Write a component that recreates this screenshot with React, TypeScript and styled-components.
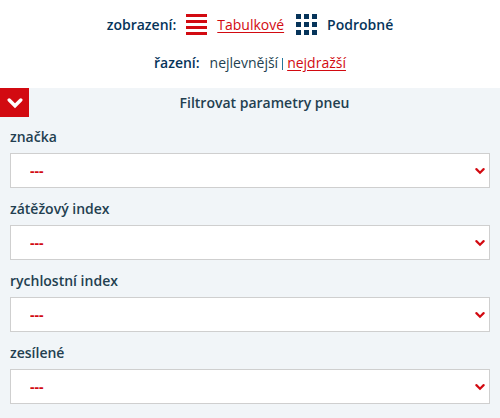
import React, { useId } from "react";
import styled, { createGlobalStyle } from "styled-components";

const red = "#d20a11";
const navy = "#06345a";
const ink = "#233f50";

const GlobalStyle = createGlobalStyle`
  *, *::before, *::after { box-sizing: border-box; }
  body {
    margin: 0;
    background: #fff;
    color: ${ink};
    font-family: "Open Sans", "Noto Sans", sans-serif;
    font-size: 14px;
    line-height: 20px;
  }
`;

const Toolbar = styled.header`
  display: flex;
  flex-direction: column;
  align-items: center;
  gap: 18px;
  padding: 14px 0 15px;
`;

const ViewRow = styled.div`
  display: flex;
  align-items: center;
  gap: 10px;
  height: 21px;
`;

const SortRow = styled.div`
  display: flex;
  align-items: center;
  gap: 4px;
`;

const RowLabel = styled.span<{ $gap?: number }>`
  color: ${navy};
  font-weight: 600;
  margin-right: ${({ $gap }) => $gap ?? 0}px;
`;

const ViewOption = styled.span`
  display: flex;
  align-items: center;
  gap: 10px;
  margin-right: 2px;
  &:last-child { margin-right: 0; }
`;

const TextLink = styled.a`
  color: ${red};
  text-decoration: underline;
  text-underline-offset: 2px;
`;

const Active = styled.strong`
  color: ${navy};
  font-weight: 600;
`;

const Divider = styled.span`
  width: 1px;
  height: 12px;
  margin-top: 2px;
  background: #23779c;
`;

const Panel = styled.section`
  background: #f1f5f8;
  min-height: calc(100vh - 88px);
`;

const PanelHead = styled.div`
  display: grid;
  grid-template-columns: 29px 1fr;
  align-items: center;
`;

const Toggle = styled.button`
  display: flex;
  align-items: center;
  justify-content: center;
  width: 29px;
  height: 29px;
  padding: 0;
  border: 0;
  background: ${red};
  cursor: pointer;
`;

const Title = styled.h2`
  margin: 0;
  font-size: 14px;
  font-weight: 600;
  text-align: center;
`;

const Form = styled.form`
  display: flex;
  flex-direction: column;
  gap: 11px;
  padding: 10px 10px 13px;
`;

const Field = styled.div`
  display: flex;
  flex-direction: column;
  gap: 6px;
`;

const FieldLabel = styled.label`
  font-weight: 600;
`;

const SelectBox = styled.div`
  display: grid;
  align-items: center;
  & > * { grid-area: 1 / 1; }
  & > svg {
    justify-self: end;
    margin-right: 5px;
    pointer-events: none;
  }
`;

const Select = styled.select`
  appearance: none;
  width: 100%;
  height: 35px;
  padding: 0 19px;
  border: 1px solid #cfcfcf;
  border-radius: 0;
  background: #fff;
  color: ${red};
  font: inherit;
  font-weight: 700;
`;

const ListIcon = () => (
  <svg width="21" height="21" viewBox="0 0 21 21" fill={red} aria-hidden="true">
    {[0, 6, 12, 18].map((y) => (
      <rect key={y} y={y} width="21" height="3" />
    ))}
  </svg>
);

const GridIcon = () => (
  <svg width="21" height="21" viewBox="0 0 21 21" fill={navy} aria-hidden="true">
    {[0, 8, 16].map((y) =>
      [0, 8, 16].map((x) => <rect key={`${x}-${y}`} x={x} y={y} width="5" height="5" />)
    )}
  </svg>
);

const Chevron = ({ size, color }: { size: number; color: string }) => (
  <svg width={size} height={size} viewBox="0 0 16 16" fill="none" aria-hidden="true">
    <path
      d="M2.2 5L8 10.8L13.8 5"
      stroke={color}
      strokeWidth="3.4"
      strokeLinecap="round"
    />
  </svg>
);

function FilterField({ label }: { label: string }) {
  const id = useId();
  return (
    <Field>
      <FieldLabel htmlFor={id}>{label}</FieldLabel>
      <SelectBox>
        <Select id={id}>
          <option>---</option>
        </Select>
        <Chevron size={10} color={red} />
      </SelectBox>
    </Field>
  );
}

const filters = ["značka", "zátěžový index", "rychlostní index", "zesílené"];

export default function App() {
  return (
    <>
      <GlobalStyle />
      <Toolbar>
        <ViewRow>
          <RowLabel>zobrazení:</RowLabel>
          <ViewOption>
            <ListIcon />
            <TextLink href="#tabulkove">Tabulkové</TextLink>
          </ViewOption>
          <ViewOption>
            <GridIcon />
            <Active>Podrobné</Active>
          </ViewOption>
        </ViewRow>
        <SortRow>
          <RowLabel $gap={6}>řazení:</RowLabel>
          <span>nejlevnější</span>
          <Divider />
          <TextLink href="#nejdrazsi">nejdražší</TextLink>
        </SortRow>
      </Toolbar>
      <Panel>
        <PanelHead>
          <Toggle type="button" aria-label="Filtrovat parametry pneu">
            <Chevron size={16} color="#fff" />
          </Toggle>
          <Title>Filtrovat parametry pneu</Title>
        </PanelHead>
        <Form>
          {filters.map((label) => (
            <FilterField key={label} label={label} />
          ))}
        </Form>
      </Panel>
    </>
  );
}
